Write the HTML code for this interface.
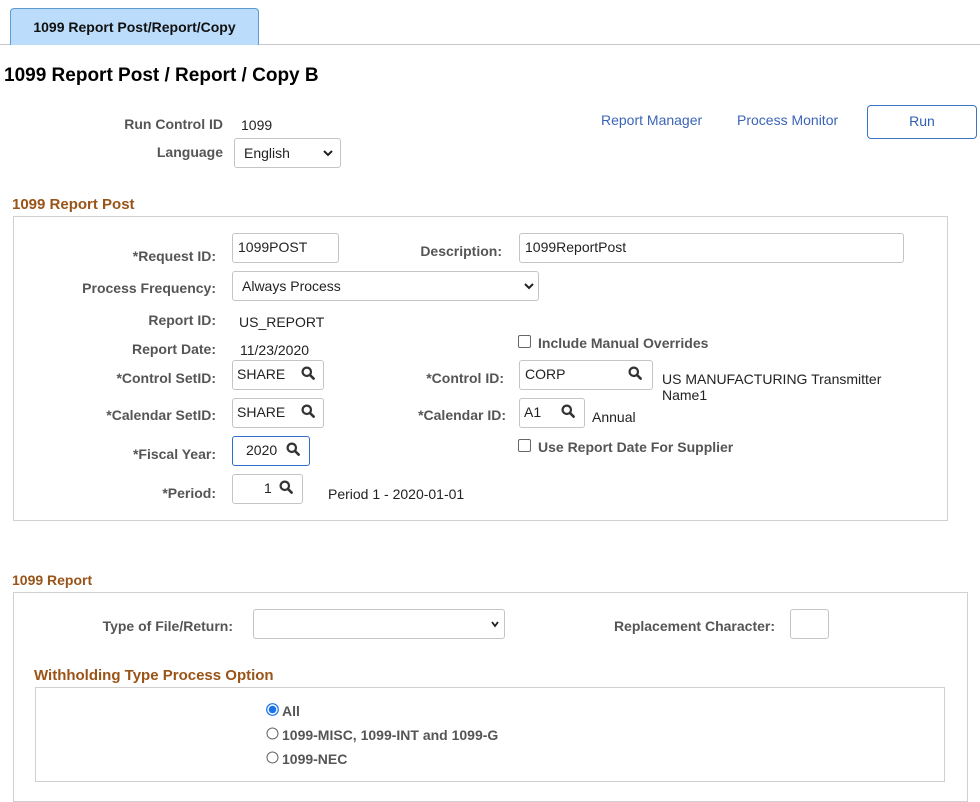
<!DOCTYPE html>
<html><head><style>
body{margin:0;width:980px;height:793px;position:relative;background:#fff;font-family:"Liberation Sans",Arial,sans-serif;overflow:hidden}
.a{position:absolute;white-space:nowrap}
.lbl{position:absolute;font-size:14px;font-weight:bold;color:#555;text-align:right;white-space:nowrap}
.val{position:absolute;font-size:14px;color:#222;white-space:nowrap}
.box{position:absolute;border:1px solid #c4c4c4;border-radius:3px;background:#fff;box-sizing:border-box;font-size:14px;color:#222;padding:0 0 0 5px;white-space:nowrap}
.sec{position:absolute;font-size:15px;font-weight:bold;color:#9a5417}
.grp{position:absolute;border:1px solid #d0d0d0;box-sizing:border-box}
.chk{position:absolute;width:11px;height:11px;border:1px solid #666;border-radius:2px;background:#fff}
.mg{position:absolute;width:14px;height:14px}
.chev{position:absolute;width:12px;height:8px}
</style></head><body>
<div style="position:absolute;left:0;top:44px;width:980px;height:1px;background:#c8c8c8"></div>
<div style="position:absolute;left:10px;top:8px;width:249px;height:37px;box-sizing:border-box;background:#bbdcfa;border:1px solid #5b9bd8;border-bottom:none;border-radius:4px 4px 0 0;font-size:14px;font-weight:bold;color:#111;text-align:center;line-height:36px">1099 Report Post/Report/Copy</div>
<div class="a" style="left:4px;top:65px;font-size:19px;font-weight:bold;color:#000">1099 Report Post / Report / Copy B</div>

<div class="lbl" style="right:757px;top:116px">Run Control ID</div>
<div class="val" style="left:241px;top:117px">1099</div>
<div class="lbl" style="right:757px;top:144px">Language</div>
<div class="box" style="left:234px;top:138px;width:107px;height:30px;line-height:28px;padding-left:9px">English</div>
<svg class="chev" style="left:322px;top:149px" viewBox="0 0 12 8"><path d="M2 2l4 4 4-4" stroke="#222" stroke-width="2" fill="none"/></svg>

<div class="a" style="left:601px;top:112px;font-size:14px;color:#3b64b8">Report Manager</div>
<div class="a" style="left:737px;top:112px;font-size:14px;color:#3b64b8">Process Monitor</div>
<div style="position:absolute;left:867px;top:105px;width:110px;height:34px;box-sizing:border-box;border:1px solid #3a76c4;border-radius:4px;font-size:14px;color:#2f5fb0;text-align:center;line-height:31px">Run</div>

<div class="sec" style="left:12px;top:196px">1099 Report Post</div>
<div class="grp" style="left:13px;top:216px;width:935px;height:305px"></div>

<div class="lbl" style="right:764px;top:248px">*Request ID:</div>
<div class="box" style="left:232px;top:233px;width:107px;height:30px;line-height:27px">1099POST</div>
<div class="lbl" style="right:478px;top:243px">Description:</div>
<div class="box" style="left:519px;top:233px;width:385px;height:30px;line-height:27px;padding-left:5px">1099ReportPost</div>

<div class="lbl" style="right:764px;top:280px">Process Frequency:</div>
<div class="box" style="left:232px;top:271px;width:307px;height:30px;line-height:28px;padding-left:9px">Always Process</div>
<svg class="chev" style="left:523px;top:282px" viewBox="0 0 12 8"><path d="M2 2l4 4 4-4" stroke="#222" stroke-width="2" fill="none"/></svg>

<div class="lbl" style="right:764px;top:312px">Report ID:</div>
<div class="val" style="left:239px;top:314px">US_REPORT</div>
<div class="lbl" style="right:764px;top:341px">Report Date:</div>
<div class="val" style="left:240px;top:342px">11/23/2020</div>
<div class="chk" style="left:518px;top:335px"></div>
<div class="lbl" style="left:538px;top:335px;text-align:left">Include Manual Overrides</div>

<div class="lbl" style="right:764px;top:370px">*Control SetID:</div>
<div class="box" style="left:232px;top:360px;width:92px;height:30px;line-height:27px;padding-left:4px">SHARE</div>
<svg class="mg" style="left:301px;top:366px" viewBox="0 0 14 14"><circle cx="5.8" cy="5.8" r="4.2" stroke="#333" stroke-width="2.2" fill="none"/><path d="M9 9l3.6 3.6" stroke="#333" stroke-width="2.6" stroke-linecap="round"/></svg>
<div class="lbl" style="right:476px;top:370px">*Control ID:</div>
<div class="box" style="left:519px;top:360px;width:134px;height:30px;line-height:27px">CORP</div>
<svg class="mg" style="left:628px;top:366px" viewBox="0 0 14 14"><circle cx="5.8" cy="5.8" r="4.2" stroke="#333" stroke-width="2.2" fill="none"/><path d="M9 9l3.6 3.6" stroke="#333" stroke-width="2.6" stroke-linecap="round"/></svg>
<div class="val" style="left:662px;top:371px;line-height:16px">US MANUFACTURING Transmitter<br>Name1</div>

<div class="lbl" style="right:764px;top:407px">*Calendar SetID:</div>
<div class="box" style="left:232px;top:398px;width:92px;height:30px;line-height:27px;padding-left:4px">SHARE</div>
<svg class="mg" style="left:301px;top:404px" viewBox="0 0 14 14"><circle cx="5.8" cy="5.8" r="4.2" stroke="#333" stroke-width="2.2" fill="none"/><path d="M9 9l3.6 3.6" stroke="#333" stroke-width="2.6" stroke-linecap="round"/></svg>
<div class="lbl" style="right:474px;top:407px">*Calendar ID:</div>
<div class="box" style="left:519px;top:398px;width:66px;height:30px;line-height:27px;padding-left:4px">A1</div>
<svg class="mg" style="left:561px;top:404px" viewBox="0 0 14 14"><circle cx="5.8" cy="5.8" r="4.2" stroke="#333" stroke-width="2.2" fill="none"/><path d="M9 9l3.6 3.6" stroke="#333" stroke-width="2.6" stroke-linecap="round"/></svg>
<div class="val" style="left:592px;top:409px">Annual</div>

<div class="lbl" style="right:764px;top:446px">*Fiscal Year:</div>
<div class="box" style="left:232px;top:436px;width:78px;height:30px;line-height:27px;border-color:#2f6fc8;padding-left:13px">2020</div>
<svg class="mg" style="left:286px;top:442px" viewBox="0 0 14 14"><circle cx="5.8" cy="5.8" r="4.2" stroke="#333" stroke-width="2.2" fill="none"/><path d="M9 9l3.6 3.6" stroke="#333" stroke-width="2.6" stroke-linecap="round"/></svg>
<div class="chk" style="left:518px;top:439px"></div>
<div class="lbl" style="left:538px;top:439px;text-align:left">Use Report Date For Supplier</div>

<div class="lbl" style="right:764px;top:485px">*Period:</div>
<div class="box" style="left:232px;top:474px;width:71px;height:30px;line-height:27px;padding-left:31px">1</div>
<svg class="mg" style="left:279px;top:480px" viewBox="0 0 14 14"><circle cx="5.8" cy="5.8" r="4.2" stroke="#333" stroke-width="2.2" fill="none"/><path d="M9 9l3.6 3.6" stroke="#333" stroke-width="2.6" stroke-linecap="round"/></svg>
<div class="val" style="left:328px;top:486px">Period 1 - 2020-01-01</div>

<div class="sec" style="left:12px;top:572px;font-size:14px">1099 Report</div>
<div class="grp" style="left:13px;top:592px;width:955px;height:210px"></div>
<div class="lbl" style="right:747px;top:618px">Type of File/Return:</div>
<div class="box" style="left:253px;top:609px;width:252px;height:30px"></div>
<svg class="chev" style="left:489px;top:620px" viewBox="0 0 12 8"><path d="M3 2l3 4 3-4" stroke="#222" stroke-width="1.8" fill="none"/></svg>
<div class="lbl" style="right:205px;top:618px">Replacement Character:</div>
<div class="box" style="left:790px;top:609px;width:39px;height:30px"></div>

<div class="sec" style="left:34px;top:667px">Withholding Type Process Option</div>
<div class="grp" style="left:35px;top:687px;width:910px;height:95px"></div>
<svg class="a" style="left:266px;top:703px" width="13" height="13" viewBox="0 0 13 13"><circle cx="6.5" cy="6.5" r="5.8" fill="#fff" stroke="#1a73e8" stroke-width="1.2"/><circle cx="6.5" cy="6.5" r="3.8" fill="#1a73e8"/></svg>
<div class="lbl" style="left:282px;top:703px;text-align:left">All</div>
<svg class="a" style="left:266px;top:727px" width="13" height="13" viewBox="0 0 13 13"><circle cx="6.5" cy="6.5" r="5.5" fill="#fff" stroke="#666" stroke-width="1"/></svg>
<div class="lbl" style="left:282px;top:727px;text-align:left">1099-MISC, 1099-INT and 1099-G</div>
<svg class="a" style="left:266px;top:751px" width="13" height="13" viewBox="0 0 13 13"><circle cx="6.5" cy="6.5" r="5.5" fill="#fff" stroke="#666" stroke-width="1"/></svg>
<div class="lbl" style="left:282px;top:751px;text-align:left">1099-NEC</div>
</body></html>
